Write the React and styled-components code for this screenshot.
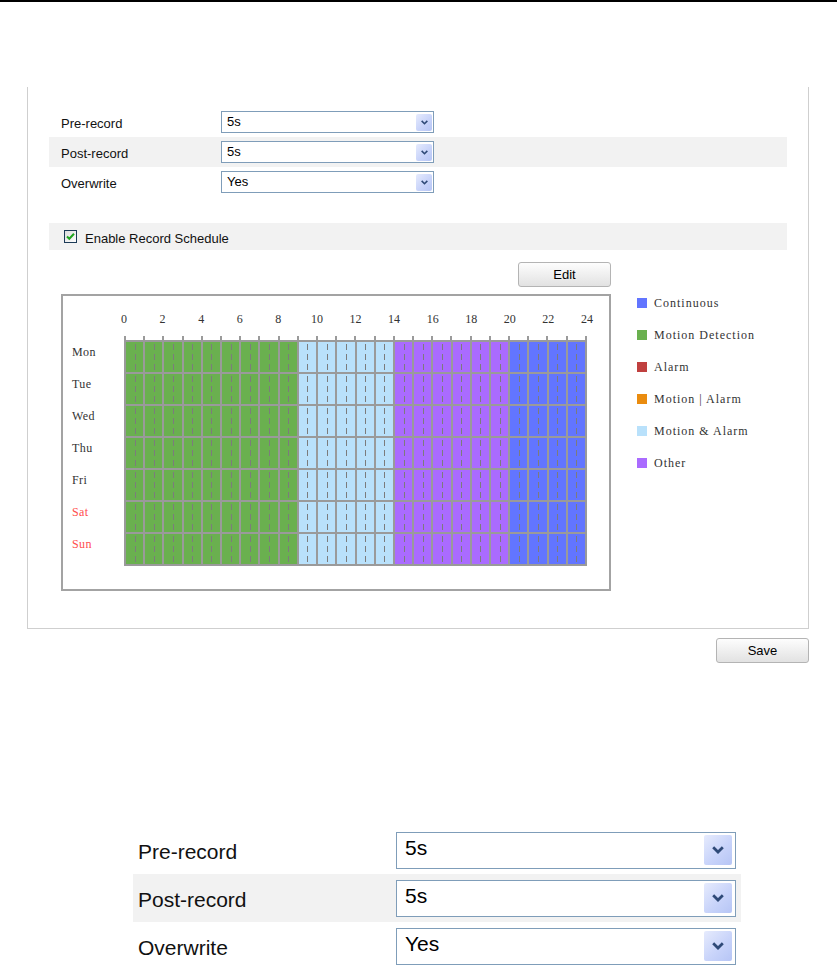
import React from "react"
import styled, { createGlobalStyle } from "styled-components"

const GlobalStyle = createGlobalStyle`
  html, body {
    margin: 0;
    padding: 0;
    background: #fff;
  }
  body {
    font-family: "Liberation Sans", Arial, sans-serif;
    color: #000;
    overflow: hidden;
  }
`;

const DAYS = ["Mon", "Tue", "Wed", "Thu", "Fri", "Sat", "Sun"];
const HOUR_LABELS = [0, 2, 4, 6, 8, 10, 12, 14, 16, 18, 20, 22, 24];

const COLORS = {
    continuous: "#6275ff",
    motion: "#6ab04f",
    alarm: "#c0403f",
    motionOrAlarm: "#ea8c0f",
    motionAndAlarm: "#b9e1fb",
    other: "#aa6bff",
};

const LEGEND = [
    { key: "continuous", label: "Continuous" },
    { key: "motion", label: "Motion Detection" },
    { key: "alarm", label: "Alarm" },
    { key: "motionOrAlarm", label: "Motion | Alarm" },
    { key: "motionAndAlarm", label: "Motion & Alarm" },
    { key: "other", label: "Other" },
];

const hourColor = (h) => {
    if (h < 9) return COLORS.motion
    if (h < 14) return COLORS.motionAndAlarm
    if (h < 20) return COLORS.other
    return COLORS.continuous
}

const Chevron = ({ size }) => (
    <svg width={size} height={size} viewBox="0 0 16 16">
        <path d="M4.5 6 L8 9.5 L11.5 6" fill="none" stroke="#2f4a78" strokeWidth="2" />
    </svg>
)

const Dropdown = ({ value, big }) => (
    <Select $big={big}>
        <SelectValue $big={big}>{value}</SelectValue>
        <DropButton $big={big}>
            <Chevron size={big ? 22 : 13} />
        </DropButton>
    </Select>
)

const RecordFields = ({ big }) => (
    <>
        <FormRow $big={big}>
            <Label $big={big}>Pre-record</Label>
            <Dropdown value="5s" big={big} />
        </FormRow>
        <FormRow $big={big} $shaded>
            <Label $big={big}>Post-record</Label>
            <Dropdown value="5s" big={big} />
        </FormRow>
        <FormRow $big={big}>
            <Label $big={big}>Overwrite</Label>
            <Dropdown value="Yes" big={big} />
        </FormRow>
    </>
)

const CheckIcon = () => (
    <svg width="13" height="13" viewBox="0 0 13 13">
        <defs>
            <linearGradient id="cbg" x1="0" y1="0" x2="1" y2="1">
                <stop offset="0" stopColor="#dcdcdc" />
                <stop offset="1" stopColor="#ffffff" />
            </linearGradient>
        </defs>
        <rect x="0.5" y="0.5" width="12" height="12" fill="url(#cbg)" stroke="#1c3b57" />
        <path d="M3 6.5 L5.3 8.8 L10 3.8" fill="none" stroke="#1fa51f" strokeWidth="2" />
    </svg>
)

const App = () => {
    return (
    <>
        <GlobalStyle />
        <TopRule />
        <Panel>
            <RecordFields />
            <ScheduleBand>
                <CheckIcon />
                <BandText>Enable Record Schedule</BandText>
            </ScheduleBand>
            <ScheduleArea>
                <ChartColumn>
                    <EditBar>
                        <Button>Edit</Button>
                    </EditBar>
                    <ChartBox>
                        <DayColumn>
                            {DAYS.map((d, i) => (
                                <DayLabel key={d} $weekend={i > 4}>{d}</DayLabel>
                            ))}
                        </DayColumn>
                        <Plot>
                            <HourAxis>
                                {HOUR_LABELS.map((h) => <HourLabel key={h}>{h}</HourLabel>)}
                            </HourAxis>
                            <Ticks>
                                {Array.from({ length: 25 }, (_, i) => <Tick key={i} />)}
                            </Ticks>
                            <Grid>
                                {DAYS.map((d) =>
                                    Array.from({ length: 24 }, (_, h) => (
                                        <Cell key={d + h} $color={hourColor(h)} />
                                    ))
                                )}
                            </Grid>
                        </Plot>
                    </ChartBox>
                </ChartColumn>
                <Legend>
                    {LEGEND.map((item) => (
                        <LegendItem key={item.key}>
                            <Swatch $color={COLORS[item.key]} />
                            {item.label}
                        </LegendItem>
                    ))}
                </Legend>
            </ScheduleArea>
        </Panel>
        <SaveBar>
            <Button>Save</Button>
        </SaveBar>
        <BigSection>
            <RecordFields big />
        </BigSection>
    </>
    )
}

const TopRule = styled.div`
height: 2px;
background: #000;
`;

const Panel = styled.section`
margin: 85px 0 0 27px;
width: 782px;
box-sizing: border-box;
padding: 20px 21px 37px;
border: 1px solid #cfcfcf;
border-top: none;
`;

const FormRow = styled.div`
display: flex;
align-items: center;
height: ${p => p.$big ? 48 : 30}px;
padding-left: ${p => p.$big ? 5 : 12}px;
background: ${p => p.$shaded ? "#f2f2f2" : "transparent"};
`;

const Label = styled.div`
width: ${p => p.$big ? 258 : 160}px;
font-size: ${p => p.$big ? 21 : 13}px;
padding-top: ${p => p.$big ? 4 : 3}px;
color: #111;
`;

const Select = styled.div`
box-sizing: border-box;
display: flex;
align-items: center;
justify-content: space-between;
width: ${p => p.$big ? 340 : 213}px;
height: ${p => p.$big ? 37 : 22}px;
border: 1px solid #7f9db9;
background: #fff;
`;

const SelectValue = styled.span`
font-size: ${p => p.$big ? 21 : 13}px;
padding-left: ${p => p.$big ? 8 : 5}px;
margin-top: ${p => p.$big ? -4 : -2}px;
`;

const DropButton = styled.div`
display: flex;
align-items: center;
justify-content: center;
width: ${p => p.$big ? 28 : 16}px;
height: ${p => p.$big ? 30 : 17}px;
margin-right: ${p => p.$big ? 3 : 1}px;
border-radius: 2px;
background: linear-gradient(135deg, #e6ebfd 0%, #c9d4fa 55%, #b6c5f5 100%);
`;

const ScheduleBand = styled.div`
display: flex;
align-items: center;
gap: 8px;
height: 27px;
margin-top: 26px;
padding-left: 15px;
background: #f2f2f2;
font-size: 13px;
color: #111;
`;

const BandText = styled.span`
padding-top: 4px;
`;

const ScheduleArea = styled.div`
display: flex;
margin: 12px 0 0 12px;
`;

const ChartColumn = styled.div`
width: 550px;
`;

const EditBar = styled.div`
display: flex;
justify-content: flex-end;
margin-bottom: 7px;
`;

const Button = styled.button`
width: 93px;
height: 25px;
padding: 0;
border: 1px solid #b4b4b4;
border-radius: 3px;
background: linear-gradient(#fdfdfd, #e2e2e2);
font-family: "Liberation Sans", Arial, sans-serif;
font-size: 13px;
color: #000;
`;

const ChartBox = styled.div`
box-sizing: border-box;
display: flex;
height: 297px;
padding: 13px 22px 0 9px;
border: 2px solid #a3a3a3;
font-family: "Liberation Serif", "Times New Roman", serif;
font-size: 12px;
color: #333;
`;

const DayColumn = styled.div`
width: 52px;
padding-top: 27px;
`;

const DayLabel = styled.div`
height: 32px;
line-height: 32px;
letter-spacing: 0.4px;
color: ${p => p.$weekend ? "#ff4d4d" : "#333"};
`;

const Plot = styled.div`
width: 463px;
`;

const HourAxis = styled.div`
display: flex;
justify-content: space-between;
width: 483px;
margin-left: -10px;
height: 20px;
line-height: 20px;
`;

const HourLabel = styled.span`
width: 20px;
text-align: center;
color: #333;
`;

const Ticks = styled.div`
display: flex;
justify-content: space-between;
height: 4px;
margin-top: 7px;
`;

const Tick = styled.span`
width: 2px;
background: #9a9a9a;
`;

const Grid = styled.div`
display: grid;
grid-template-columns: repeat(24, 1fr);
grid-auto-rows: 30px;
gap: 2px;
padding: 2px;
background: #9a9a9a;
`;

const Cell = styled.div`
position: relative;
background: ${p => p.$color};

&::after {
    content: "";
    position: absolute;
    left: 50%;
    top: 2px;
    bottom: 2px;
    width: 1px;
    background: repeating-linear-gradient(to bottom, #7c7c7c 0 6px, transparent 6px 10px);
}
`;

const Legend = styled.div`
display: flex;
flex-direction: column;
gap: 20px;
margin: 35px 0 0 26px;
font-family: "Liberation Serif", "Times New Roman", serif;
font-size: 12px;
letter-spacing: 1px;
color: #333;
`;

const LegendItem = styled.div`
display: flex;
align-items: center;
gap: 7px;
height: 12px;
white-space: nowrap;
`;

const Swatch = styled.span`
width: 10px;
height: 10px;
background: ${p => p.$color};
`;

const SaveBar = styled.div`
display: flex;
justify-content: flex-end;
width: 809px;
margin-top: 9px;
`;

const BigSection = styled.div`
width: 608px;
margin: 163px 0 0 133px;
`;

export default App
